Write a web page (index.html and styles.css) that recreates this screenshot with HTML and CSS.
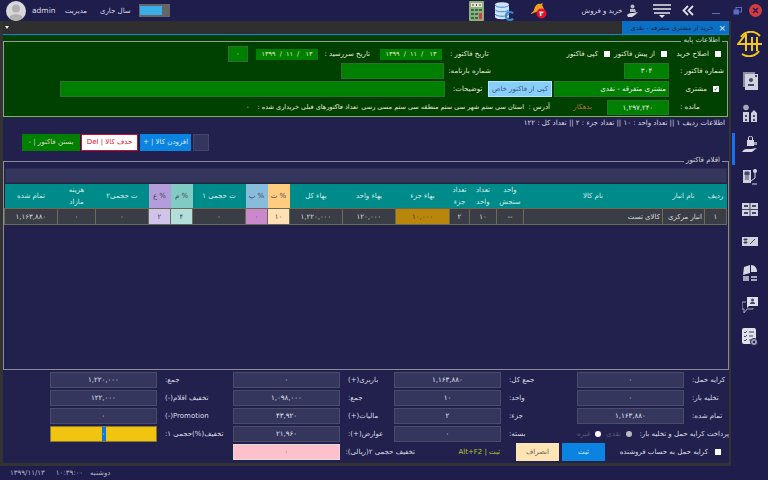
FILE: index.html
```html
<!DOCTYPE html>
<html lang="fa" dir="rtl">
<head>
  <meta charset="UTF-8">
  <meta name="viewport" content="width=device-width, initial-scale=1.0">
  <title>خرید و فروش</title>
  <link rel="stylesheet" href="styles.css">
</head>
<body>

<header class="topbar">
  <div class="top-left">
    <svg class="avatar" viewBox="0 0 20 20"><circle cx="10" cy="10" r="10" fill="#d8d8d8"/><circle cx="10" cy="7.5" r="4" fill="#b0b0b0"/><path d="M3 17c1-5 13-5 14 0a10 10 0 0 1-14 0z" fill="#b0b0b0"/></svg>
    <span class="top-user">admin</span>
    <span class="top-link">مدیریت</span>
    <span class="top-link top-year">سال جاری</span>
    <span class="switch"><i></i></span>
  </div>
  <div class="top-right">
    <svg class="ic-calc" viewBox="0 0 15 20"><rect width="15" height="20" rx="1" fill="#8fae7a"/><rect x="2" y="2" width="11" height="4" fill="#e6e6d6"/><path d="M4 3v2M7.500 3v2M11 3v2" stroke="#444" stroke-width="1"/><path d="M2 8h3v2H2zM6 8h3v2H6zM2 12h3v2H2zM6 12h3v2H6zM2 16h3v2H2zM6 16h3v2H6z" fill="#2e6e50"/><path d="M10 8h3v2h-3z" fill="#2e6e50"/><path d="M10 12h3v6h-3z" fill="#d0404a"/></svg>
    <svg class="ic-db" viewBox="0 0 20 20"><path d="M1 3.500C1 .5 15 .5 15 3.500V16c0 3-14 3-14 0z" fill="#cfe3f8"/><path d="M1 4c1 3 13 3 14 0M1 8.500c1 3 13 3 14 0M1 13c1 3 13 3 14 0" fill="none" stroke="#3b88d0" stroke-width="1"/><path d="M19 12.500a4 4 0 1 0 0 5" fill="none" stroke="#3b88d0" stroke-width="2.200"/></svg>
    <svg class="ic-bell" viewBox="0 0 17 17"><path d="M1 11c3-1 3-4 4-6 1-3 4-4 6-3l1-1 1 1-1 1 2 4-13 5z" fill="#f0a020"/><circle cx="11.500" cy="11.500" r="5" fill="#e8102a"/><text x="11.500" y="14" class="bell-num">۳</text></svg>
    <span class="top-title">خرید و فروش</span>
    <svg class="ic-person" viewBox="0 0 11 13"><circle cx="5.500" cy="2.500" r="2" fill="#b8b8c4"/><path d="M3 5h5l1 3H3z" fill="#b8b8c4"/><path d="M0 11c2-2 4-2 6-2l5-1-3 3-3 2H1z" fill="#d8d8e0"/></svg>
    <svg class="ic-menu" viewBox="0 0 18 14"><path d="M0 1h18M0 5h18M1 9h16" stroke="#e8e8f0" stroke-width="1.600"/><path d="M6 11h6l-3 3z" fill="#e8e8f0"/></svg>
    <svg class="ic-back" viewBox="0 0 12 11"><path d="M6 1 1.500 5.500 6 10M11 1 6.500 5.500 11 10" fill="none" stroke="#e0e0ea" stroke-width="1.800"/></svg>
    <span class="win-min"></span>
    <svg class="ic-restore" viewBox="0 0 9 8"><rect x="3" y="0.500" width="5.500" height="4.500" fill="none" stroke="#5a6ec8"/><rect x="0.500" y="2.500" width="5.500" height="5" fill="#5a6ec8"/></svg>
    <svg class="ic-close" viewBox="0 0 13 13"><circle cx="6.500" cy="6.500" r="6.500" fill="#d83a42"/><path d="M4 4l5 5M9 4l-5 5" stroke="#1e1c4a" stroke-width="1.400"/></svg>
  </div>
</header>

<div class="main">
  <main class="window">
    <div class="tabbar">
      <div class="tab"><span class="tab-x">×</span><span>خرید از مشتری متفرقه - نقدی</span></div>
      <span class="tab-caret"></span>
    </div>

    <section class="base-wrap">
      <fieldset class="base">
        <legend>اطلاعات پایه</legend>
        <div class="row row1">
          <span class="chk"></span>
          <span class="lbl">اصلاح خرید</span>
          <span class="chk"></span>
          <span class="lbl">از پیش فاکتور</span>
          <span class="chk"></span>
          <span class="lbl">کپی فاکتور</span>
          <span class="lbl-flat">تاریخ فاکتور :</span>
          <span class="date"><bdo dir="ltr">۱۳۹۹&nbsp; / &nbsp;۱۱&nbsp; / &nbsp;&nbsp;۱۳</bdo></span>
          <span class="lbl lbl-due">تاریخ سررسید :</span>
          <span class="date"><bdo dir="ltr">۱۳۹۹&nbsp; / &nbsp;۱۱&nbsp; / &nbsp;&nbsp;۱۳</bdo></span>
          <span class="gbox zero">۰</span>
        </div>
        <div class="row row2">
          <span class="lbl-flat lbl-wide">شماره فاکتور :</span>
          <span class="gbox">۳۰۴</span>
          <span></span>
          <span class="lbl-flat">شماره بارنامه:</span>
          <span class="gbox"></span>
        </div>
        <div class="row row3">
          <span class="chk chk-on">✓</span>
          <span class="lbl">مشتری</span>
          <span class="gbox gbox-name">مشتری متفرقه - نقدی</span>
          <span class="copy-btn">کپی از فاکتور خاص</span>
          <span class="lbl-flat">توضیحات:</span>
          <span class="gbox"></span>
        </div>
        <div class="row row4">
          <span class="lbl-flat lbl-wide lbl-rem">مانده :</span>
          <span class="gbox">۱,۲۹۷,۲۴۰</span>
          <span class="debtor">بدهکار</span>
          <span class="lbl-addr">آدرس :</span>
          <span class="address addr-line">استان سی ستم شهر سی ستم منطقه سی ستم مسی رسی</span>
          <span class="address">تعداد فاکتورهای قبلی خریداری شده :</span>
          <span class="address">۰</span>
        </div>
      </fieldset>
    </section>

    <p class="info">اطلاعات ردیف ۱ || تعداد واحد : ۱۰ || تعداد جزء : ۲ || تعداد کل : ۱۲۲</p>

    <div class="actions">
      <span class="btn btn-blank"></span>
      <span class="btn btn-add">افزودن کالا | +</span>
      <span class="btn btn-del">حذف کالا | Del</span>
      <span class="btn btn-close">بستن فاکتور | -</span>
    </div>

    <fieldset class="items">
      <legend>اقلام فاکتور</legend>
      <div class="strip"></div>
      <table class="grid">
        <colgroup>
          <col class="c22"><col class="c42"><col class="c139"><col class="c27"><col class="c27"><col class="c20">
          <col class="c54"><col class="c53"><col class="c53"><col class="c22"><col class="c22"><col class="c53">
          <col class="c22"><col class="c22"><col class="c53"><col class="c38"><col class="c53">
        </colgroup>
        <thead>
          <tr>
            <th>ردیف</th><th>نام انبار</th><th>نام کالا</th><th>واحد<br>سنجش</th><th>تعداد<br>واحد</th><th>تعداد<br>جزء</th>
            <th>بهاء جزء</th><th>بهاء واحد</th><th>بهاء کل</th><th class="h-t">% ت</th><th class="h-p">% پ</th><th>ت حجمی ۱</th>
            <th class="h-m">% م</th><th class="h-a">% ع</th><th>ت حجمی۲</th><th>هزینه<br>مازاد</th><th>تمام شده</th>
          </tr>
        </thead>
        <tbody>
          <tr>
            <td>۱</td><td class="right">انبار مرکزی</td><td class="right">کالای تست</td><td>--</td><td>۱۰</td><td>۲</td>
            <td class="d-gold">۱۰,۰۰۰</td><td>۱۲۰,۰۰۰</td><td>۱,۲۲۰,۰۰۰</td><td class="d-t">۱۰</td><td class="d-p">۰</td><td>۰</td>
            <td class="d-m">۴</td><td class="d-a">۲</td><td>۰</td><td>۰</td><td>۱,۱۶۳,۸۸۰</td>
          </tr>
        </tbody>
      </table>
    </fieldset>

    <section class="totals">
      <span class="t-lbl t-a">کرایه حمل:</span><span class="tbox">۰</span>
      <span class="t-lbl">جمع کل:</span><span class="tbox">۱,۱۶۳,۸۸۰</span>
      <span class="t-lbl">باربری(+)</span><span class="tbox">۰</span>
      <span class="t-lbl">جمع:</span><span class="tbox">۱,۲۲۰,۰۰۰</span>

      <span class="t-lbl t-a">تخلیه بار:</span><span class="tbox">۰</span>
      <span class="t-lbl">واحد:</span><span class="tbox">۱۰</span>
      <span class="t-lbl">جمع:</span><span class="tbox">۱,۰۹۸,۰۰۰</span>
      <span class="t-lbl">تخفیف اقلام(-)</span><span class="tbox">۱۲۲,۰۰۰</span>

      <span class="t-lbl t-a">تمام شده:</span><span class="tbox">۱,۱۶۳,۸۸۰</span>
      <span class="t-lbl">جزء:</span><span class="tbox">۲</span>
      <span class="t-lbl">مالیات(+)</span><span class="tbox">۴۳,۹۲۰</span>
      <span class="t-lbl">Promotion(-)</span><span class="tbox">۰</span>

      <div class="pay">
        <span class="pay-text">پرداخت کرایه حمل و تخلیه بار:</span>
        <i class="radio radio-on"></i><span class="muted">نقدی</span>
        <i class="radio"></i><span class="muted">غیره</span>
      </div>
      <span class="t-lbl">بسته:</span><span class="tbox">۰</span>
      <span class="t-lbl">عوارض(+):</span><span class="tbox">۲۱,۹۶۰</span>
      <span class="t-lbl">تخفیف(%)حجمی ۱:</span><span class="tbox tbox-yellow"><b>۰</b></span>

      <div class="submit-row">
        <div class="seller"><span class="chk"></span><span>کرایه حمل به حساب فروشنده</span></div>
        <span class="btn-save">ثبت</span>
        <span class="btn-cancel">انصراف</span>
        <span class="hotkey">ثبت | Alt+F2</span>
        <span class="t-pink">تخفیف حجمی ۲(ریالی):</span>
      </div>
      <span class="tbox tbox-pink">۰</span>
    </section>
  </main>

  <nav class="sidebar">
    <svg class="ic-logo" viewBox="0 0 26 26"><path d="M4 6A12 12 0 0 1 23 5M22 20A12 12 0 0 1 5 23" fill="none" stroke="#f2c81e" stroke-width="2"/><path d="M9 3 1 13H25M9 3V20M15 6V20M20 6V20" fill="none" stroke="#f2c81e" stroke-width="2"/></svg>
    <svg class="side" viewBox="0 0 16 18"><rect x="1" y="0" width="12" height="15" fill="#8c8ca4"/><rect x="3" y="2" width="13" height="16" fill="#d2d2de"/><circle cx="9" cy="8" r="2" fill="#44466a"/><path d="M6 14v-2h6v2zM13 3h2v2h-2z" fill="#44466a"/></svg>
    <svg class="side" viewBox="0 0 16 18"><path d="M1 8h6v10H1zM9 9l3-3 3 3v9H9z" fill="#cfcfdc"/><circle cx="4" cy="3.500" r="2.800" fill="#a8a8bc"/><path d="M3 11h2v2H3zM3 15h2v2H3zM11 11h2v2h-2zM11 15h2v2h-2z" fill="#44466a"/></svg>
    <svg class="side" viewBox="0 0 16 18"><rect x="5" y="4" width="7" height="6" fill="#d8d8e4"/><path d="M6.500 4V2a2 2 0 0 1 4 0v2" fill="none" stroke="#d8d8e4"/><path d="M12 6h3v3h-3z" fill="#9c9cb0"/><path d="M0 16c2-4 6-3 9-3l6-1-5 4H3z" fill="#d8d8e4"/></svg>
    <svg class="side" viewBox="0 0 16 18"><rect x="1" y="2" width="8" height="13" fill="#cfcfdc"/><path d="M3 4h4v3H3zM3 9h4M3 11h4" stroke="#44466a" fill="#44466a"/><circle cx="13" cy="3" r="2" fill="#d8d8e4"/><path d="M13 5v5l-4 3M10 16h5" stroke="#d8d8e4" fill="none"/></svg>
    <svg class="side" viewBox="0 0 16 18"><rect x="0" y="3" width="16" height="13" fill="#d2d2de"/><path d="M0 9.500h16M8 3v13" stroke="#44466a"/><path d="M2 5h4v2H2zM10 5h4v2h-4zM2 12h4v2H2zM10 12h4v2h-4z" fill="#44466a"/></svg>
    <svg class="side" viewBox="0 0 16 18"><rect x="0" y="5" width="16" height="9" fill="#d2d2de"/><path d="M2 7h3v1H2zM2 10h3v1H2zM8 12l5-5" stroke="#44466a"/></svg>
    <svg class="side" viewBox="0 0 16 18"><path d="M2 3l6-2v8l-7 2zM9 1c4 0 6 3 6 7H9z" fill="#d8d8e4"/><path d="M1 12h6v5H1z" fill="#a8a8bc"/><path d="M9 13h6M9 16h6" stroke="#d8d8e4" stroke-width="1.500"/></svg>
    <svg class="side" viewBox="0 0 16 18"><path d="M5 1h11v9H7l-2 2z" fill="#e0e0ea"/><circle cx="10.500" cy="4" r="1.500" fill="#44466a"/><path d="M8 8c0-3 5-3 5 0z" fill="#44466a"/><path d="M4 6H0v7h2v4l3-4h6v-1" fill="none" stroke="#a8a8bc"/></svg>
    <svg class="side" viewBox="0 0 16 18"><rect x="0" y="0" width="14" height="16" rx="2" fill="#e0e0ea"/><path d="M2 4l1 1 2-2M2 8l1 1 2-2M2 12l1 1 2-2M7 4h5M7 8h4M7 12h2" stroke="#44466a" fill="none"/><circle cx="12" cy="14" r="3.500" fill="#a8a8bc" stroke="#1f1d4b"/><circle cx="12" cy="14" r="1.200" fill="#1f1d4b"/></svg>
    <span class="side-mark"></span>
  </nav>
</div>

<footer class="statusbar">
  <span>دوشنبه</span>
  <span class="time">۱۰:۳۹:۰۰</span>
  <span><bdo dir="ltr">۱۳۹۹/۱۱/۱۳</bdo></span>
</footer>

</body>
</html>
```

FILE: styles.css
```css
* {
  box-sizing: border-box;
}

body {
  margin: 0;
  width: 768px;
  height: 480px;
  overflow: hidden;
  display: flex;
  flex-direction: column;
  background-color: #1f1d4b;
  color: #dcdce6;
  font-family: "DejaVu Sans", "Noto Sans", sans-serif;
  font-size: 7px;
}

/* top bar */
.topbar {
  direction: ltr;
  height: 21px;
  display: flex;
  justify-content: space-between;
  align-items: center;
}

.top-left, .top-right {
  display: flex;
  align-items: center;
}

.avatar {
  width: 20px;
  height: 20px;
  margin-left: 6px;
}

.top-user {
  margin-left: 6px;
  width: 33px;
  font-size: 7.500px;
}

.top-link {
  width: 22px;
  text-align: center;
  white-space: nowrap;
}

.top-year {
  width: 29px;
  margin-left: 13px;
}

.switch {
  width: 31px;
  height: 13px;
  margin-left: 10px;
  padding: 2px 8px 2px 1px;
  background-color: #666;
}

.switch i {
  display: block;
  height: 100%;
  background-color: #3aaee8;
}

.top-right {
  padding-right: 6px;
}

.ic-calc { width: 15px; height: 20px; }
.ic-db { width: 20px; height: 20px; margin-left: 10px; }
.ic-bell { width: 17px; height: 17px; margin-left: 16px; }
.top-title { width: 42px; margin-left: 34px; text-align: center; white-space: nowrap; }
.ic-person { width: 11px; height: 13px; margin-left: 4px; }
.ic-menu { width: 18px; height: 14px; margin-left: 15px; }
.ic-back { width: 12px; height: 11px; margin-left: 11px; }
.ic-restore { width: 9px; height: 8px; margin-left: 13px; }
.ic-close { width: 13px; height: 13px; margin-left: 7px; }

.win-min {
  width: 8px;
  height: 1px;
  margin: 6px 0 0 18px;
  background-color: #5a6ec8;
}

.bell-num {
  fill: #fff;
  font-size: 7px;
  font-weight: bold;
  text-anchor: middle;
}

/* main area */
.main {
  height: 445px;
  display: flex;
  direction: ltr;
}

.window {
  direction: rtl;
  width: 731px;
  border-left: 3px solid #333;
  border-right: 2px solid #333;
  border-bottom: 3px solid #333;
  background-color: #22214e;
}

.tabbar {
  height: 14px;
  display: flex;
  justify-content: space-between;
  background-color: #2f2f2f;
  border-bottom: 1px solid #0a84e0;
}

.tab {
  width: 107px;
  height: 13px;
  display: flex;
  gap: 5px;
  align-items: center;
  padding-right: 3px;
  background-color: #0b70c4;
  color: #12243c;
  font-size: 6.500px;
  white-space: nowrap;
}

.tab-x {
  color: #e8e8f0;
  font-size: 9px;
}

.tab-caret {
  width: 0;
  height: 0;
  margin: 5px 0 0 2px;
  border: 2.500px solid transparent;
  border-top: 3px solid #eee;
}

/* base info box */
.base-wrap {
  height: 83px;
  padding-right: 1px;
  background-color: #004000;
}

fieldset {
  margin: 0;
  padding: 0;
  min-width: 0;
  border: 1px solid #9a9a9a;
}

legend {
  height: 12px;
  line-height: 11px;
  margin-right: 5px;
  padding: 0 2px;
  color: #d8d8d8;
}

.base {
  height: 82px;
  color: #e8e8d8;
}

.row {
  display: grid;
  align-items: center;
  white-space: nowrap;
}

.row1 {
  height: 16px;
  margin-top: -1px;
  padding-right: 6px;
  grid-template-columns: 6px 48px 6px 51px 6px 113px 49px 62px 62px 62px 28px;
}

.row2 {
  height: 18px;
  grid-template-columns: 58px 45px 133px 47px 103px;
}

.row3 {
  height: 17px;
  padding-right: 8px;
  grid-template-columns: 6px 44px 115px 66px 43px 385px;
}

.row4 {
  height: 18px;
  padding-top: 2px;
  display: flex;
}

.lbl {
  padding-right: 6px;
}

.lbl-flat {
  padding-left: 8px;
  text-align: left;
}

.lbl-wide {
  padding-left: 11px;
}

.lbl-rem {
  width: 58px;
}

.lbl-due {
  padding-right: 10px;
}

.lbl-addr {
  width: 29px;
  padding-right: 3px;
}

.chk {
  width: 6px;
  height: 6px;
  background-color: #fff;
}

.chk-on {
  color: #333;
  font-size: 6px;
  line-height: 6px;
  text-align: center;
}

.date {
  height: 11px;
  line-height: 11px;
  background-color: #008000;
  color: #e8e8c8;
  font-size: 6.500px;
  text-align: center;
}

.gbox {
  height: 16px;
  line-height: 14px;
  background-color: #008000;
  border: 1px solid #2e6e2e;
  color: #eee;
  text-align: center;
}

.row4 .gbox {
  width: 62px;
  height: 15px;
}

.zero {
  width: 20px;
  margin-right: 8px;
}

.gbox-name {
  text-align: right;
  padding-right: 2px;
}

.copy-btn {
  height: 16px;
  line-height: 14px;
  margin-right: 2px;
  background-color: #87cefa;
  border: 1px solid #bde4ff;
  color: #3a5a78;
  text-align: center;
}

.debtor {
  width: 54px;
  padding-right: 15px;
  color: #b8743a;
}

.address {
  margin-left: 8px;
  font-size: 6.500px;
}

.addr-line {
  width: 158px;
}

/* line under the green box */
.info {
  height: 11px;
  margin: 0;
  padding-right: 4px;
  line-height: 10px;
  white-space: nowrap;
}

.actions {
  height: 17px;
  margin-top: 5px;
  padding-left: 19px;
  display: flex;
  justify-content: flex-end;
  gap: 2px;
}

.btn {
  line-height: 17px;
  text-align: center;
  white-space: nowrap;
}

.btn-blank {
  width: 16px;
  background-color: #35365e;
  border: 1px solid #44456c;
}

.btn-add {
  width: 51px;
  background-color: #0a84e0;
  color: #dcecff;
}

.btn-del {
  width: 57px;
  line-height: 15px;
  background-color: #fff;
  border: 1px solid #c8102e;
  color: #d8102e;
}

.btn-close {
  width: 58px;
  margin-right: -1px;
  background-color: #008000;
  color: #dcdcc8;
}

/* items */
.items {
  height: 215px;
  margin-top: 4px;
  padding: 1px 1px 0;
  border-color: #8a8a9a;
}

.strip {
  height: 15px;
  background-color: #35365e;
  border: 1px solid #2b2c50;
}

.grid {
  table-layout: fixed;
  width: 722px;
  border-collapse: collapse;
  text-align: center;
}

.c20 { width: 20px; }
.c22 { width: 22px; }
.c27 { width: 27px; }
.c38 { width: 38px; }
.c42 { width: 42px; }
.c53 { width: 53px; }
.c54 { width: 54px; }
.c139 { width: 139px; }

th {
  height: 25px;
  padding: 0;
  background-color: #008b8b;
  border-top: 1px solid #1c2a3a;
  color: #d4ecec;
  font-weight: normal;
  line-height: 12px;
}

td {
  height: 16px;
  padding: 0 2px;
  background-color: #3a3c46;
  border: 1px solid #6b6b55;
  color: #dcdcdc;
}

td.right {
  text-align: right;
  white-space: nowrap;
}

th.h-t { background-color: #ffcc80; color: #445; }
th.h-p { background-color: #87bcdc; color: #445; }
th.h-m { background-color: #80cbc4; color: #445; }
th.h-a { background-color: #b39ddb; color: #445; }
td.d-t { background-color: #ffe0b2; color: #445; }
td.d-p { background-color: #cc88cc; color: #445; }
td.d-m { background-color: #b2dfdb; color: #445; }
td.d-a { background-color: #d1c4e9; color: #445; }
td.d-gold { background-color: #b8860b; color: #4a3a10; }

/* totals */
.totals {
  margin-top: 2px;
  display: grid;
  grid-template-columns: 45px 107px 76px 107px 54px 107px 76px 107px;
  grid-auto-rows: 16px;
  row-gap: 2px;
  align-items: center;
  white-space: nowrap;
}

.t-lbl {
  padding-left: 8px;
  text-align: left;
}

.tbox {
  height: 16px;
  line-height: 14px;
  background-color: #35365e;
  border: 1px solid #4b4c68;
  color: #e4e4ee;
  text-align: center;
}

.tbox-yellow {
  background-color: #f1c40f;
  border-color: #8a7a30;
}

.tbox-yellow b {
  display: inline-block;
  width: 4px;
  background-color: #0a78e0;
  color: #fff;
  font-weight: normal;
}

.tbox-pink {
  background-color: #ffc0cb;
  border-color: #ddd;
  color: #555;
}

.pay {
  grid-column: 1 / 3;
  display: flex;
  align-items: center;
  gap: 5px;
}

.pay-text {
  width: 92px;
}

.muted {
  color: #555a78;
}

.radio {
  width: 6px;
  height: 6px;
  border-radius: 50%;
  background-color: #fff;
}

.radio-on {
  background-color: #bbb;
}

.submit-row {
  grid-column: 1 / 6;
  display: flex;
  align-items: center;
}

.seller {
  width: 124px;
  display: flex;
  gap: 7px;
  align-items: center;
  padding-right: 8px;
}

.btn-save, .btn-cancel {
  width: 43px;
  height: 18px;
  line-height: 18px;
  text-align: center;
}

.btn-save {
  background-color: #0a84e0;
  color: #dcecff;
}

.btn-cancel {
  margin-right: 3px;
  background-color: #ffe4b5;
  color: #6a6050;
}

.hotkey {
  width: 56px;
  padding-right: 16px;
  color: #b8c820;
}

.t-pink {
  padding-right: 45px;
}

/* sidebar */
.sidebar {
  position: relative;
  width: 37px;
  padding-top: 10px;
  display: flex;
  flex-direction: column;
  align-items: center;
  gap: 14px;
}

.ic-logo {
  width: 26px;
  height: 26px;
  margin-bottom: 1px;
}

.side {
  width: 16px;
  height: 18px;
}

.side-mark {
  position: absolute;
  left: 1px;
  top: 112px;
  width: 3px;
  height: 32px;
  background-color: #1a6ef0;
}

/* status bar */
.statusbar {
  height: 14px;
  padding-left: 10px;
  display: flex;
  flex-direction: row-reverse;
  justify-content: flex-end;
  align-items: center;
  direction: ltr;
  gap: 7px;
  color: #b8b8c8;
}

.time {
  margin-left: 4px;
}
```
